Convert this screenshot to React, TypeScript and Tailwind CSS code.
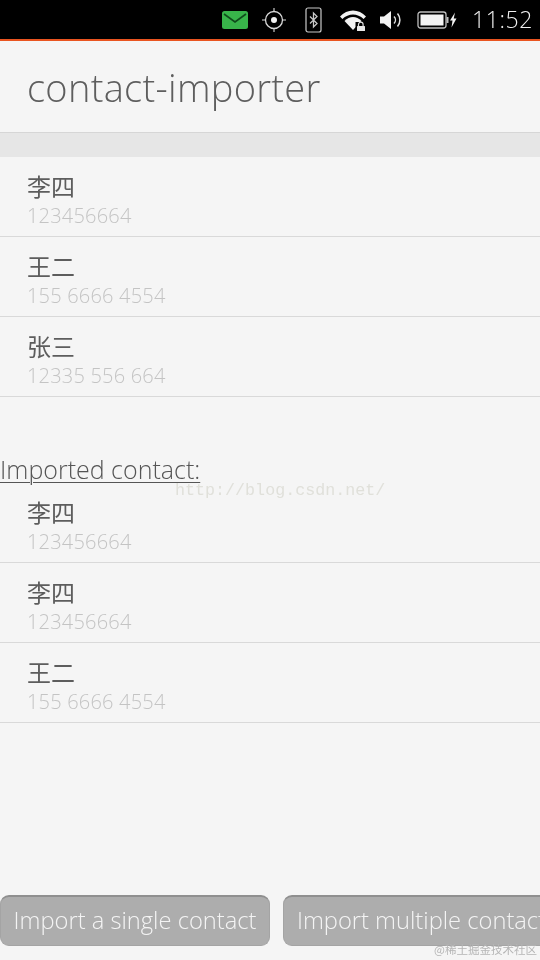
const sans = "font-['Open_Sans','Noto_Sans_CJK_SC',sans-serif]";

function Row({ name, phone }: { name: string; phone: string }) {
  return (
    <div className="h-20 border-b border-[#d9d9d9] pl-[27px] flex flex-col">
      <div className="mt-[13px] h-[32px] leading-[32px] text-[24px] font-normal text-[#5d5d5d] font-['Noto_Sans_CJK_SC',sans-serif]">{name}</div>
      <div className="h-[26px] mt-px leading-[26px] text-[20px] font-light text-[#c4c4c4] tracking-[0.2px]">{phone}</div>
    </div>
  );
}

function StatusBar() {
  return (
    <div className="h-[41px] bg-black border-b-2 border-[#e95420] flex items-center justify-end pr-[7px] shrink-0">
      <svg width="26" height="18" viewBox="0 0 26 18" className="mr-[13px]">
        <rect x="0" y="0" width="26" height="18" rx="2.500" fill="#38b44a" />
        <path d="M2 3l11 8 11-8" fill="none" stroke="#0f4a1b" strokeWidth="1.600" />
      </svg>
      <svg width="26" height="26" viewBox="0 0 26 26" className="mr-[18px]" fill="none" stroke="#d8d8d8">
        <circle cx="13" cy="13" r="8.500" strokeWidth="1.300" />
        <circle cx="13" cy="13" r="3" fill="#f2f2f2" stroke="none" />
        <path d="M13 1v3.500M13 21.500V25M1 13h3.500M21.500 13H25" strokeWidth="1.100" />
      </svg>
      <svg width="17" height="26" viewBox="0 0 17 26" className="mr-[18px]" fill="none" stroke="#c8c8c8">
        <rect x="1" y="1" width="15" height="24" rx="2" strokeWidth="1.200" />
        <path d="M5 9.500l7 7-3.500 3.500V6l3.500 3.500-7 7" strokeWidth="1.300" />
      </svg>
      <svg width="26" height="22" viewBox="0 0 26 22" className="mr-[14px]">
        <path d="M0 7.500C7-.5 19-.5 26 7.500l-2.400 2.500C17.500 4 8.500 4 2.400 10z" fill="#f2f2f2" />
        <path d="M4.500 12C9.500 6.500 16.500 6.500 21.500 12L13 21z" fill="#f2f2f2" />
        <rect x="15.500" y="13" width="11" height="9" fill="#000" />
        <path d="M18.500 17v-1.500a2.300 2.300 0 0 1 4.600 0V17" fill="none" stroke="#dcdcdc" strokeWidth="1.200" />
        <rect x="17" y="17" width="8" height="5" rx="0.500" fill="#e8e8e8" />
      </svg>
      <svg width="24" height="20" viewBox="0 0 24 20" className="mr-[13px]" fill="none">
        <path d="M0 6.500h4L11 1v18l-7-5.500H0z" fill="#f2f2f2" />
        <path d="M14 6.500a5 5 0 0 1 0 7" stroke="#e0e0e0" strokeWidth="1.500" />
        <path d="M17.500 3.500a10 10 0 0 1 0 13" stroke="#e0e0e0" strokeWidth="1.500" />
      </svg>
      <svg width="40" height="18" viewBox="0 0 40 18" className="mr-[15px]" fill="none">
        <rect x="1" y="1" width="28" height="16" rx="2.500" stroke="#bdbdbd" strokeWidth="1.300" />
        <rect x="3.500" y="3.500" width="23" height="11" fill="#f4f4f4" />
        <rect x="29.500" y="6" width="2" height="6" fill="#bdbdbd" />
        <path d="M38 1.500l-5 8h2.500l-1 7 5-9h-2.800z" fill="#f2f2f2" />
      </svg>
      <span className="text-[23px] font-light text-[#f0f0f0] tracking-[0.6px] leading-none font-['Open_Sans',sans-serif]">11:52</span>
    </div>
  );
}

export default function App() {
  return (
    <div className={`relative w-[540px] h-[960px] overflow-hidden bg-[#f5f5f5] flex flex-col will-change-transform ${sans}`}>
      <StatusBar />
      <div className="h-[92px] shrink-0 border-b border-[#d6d6d6] pl-[27px] pt-[2px] flex items-center">
        <span className="text-[38px] font-light text-[#5e5e5e] tracking-[0.3px]">contact-importer</span>
      </div>
      <div className="h-6 shrink-0 bg-[#e6e6e6]" />
      <Row name="李四" phone="123456664" />
      <Row name="王二" phone="155 6666 4554" />
      <Row name="张三" phone="12335 556 664" />
      <div className="h-[86px] shrink-0 flex items-end pb-px">
        <span className="text-[25px] leading-[26px] font-light text-[#555555] underline underline-offset-[3px] decoration-1">Imported contact:</span>
      </div>
      <Row name="李四" phone="123456664" />
      <Row name="李四" phone="123456664" />
      <Row name="王二" phone="155 6666 4554" />
      <div className="flex gap-[13px] mt-[172px] whitespace-nowrap">
        <button className="w-[270px] shrink-0 h-[51px] rounded-[9px] bg-[#adadad] border border-[#a4a4a4] border-t-2 border-t-[#8f8f8f] text-[23.700px] font-light text-[#f4f4f4]">
          Import a single contact
        </button>
        <button className="w-[288px] shrink-0 h-[51px] rounded-[9px] bg-[#adadad] border border-[#a4a4a4] border-t-2 border-t-[#8f8f8f] text-[23.700px] font-light text-[#f4f4f4]">
          Import multiple contacts
        </button>
      </div>
      <span className="absolute left-[175px] top-[481px] text-[16.700px] leading-5 text-[#e0e0da] font-['Liberation_Mono',monospace]">http://blog.csdn.net/</span>
      <span className="absolute right-[3px] top-[941px] text-[11.500px] leading-4 text-[#b5b5b5] font-['Noto_Sans_CJK_SC',sans-serif]">@稀土掘金技术社区</span>
    </div>
  );
}
